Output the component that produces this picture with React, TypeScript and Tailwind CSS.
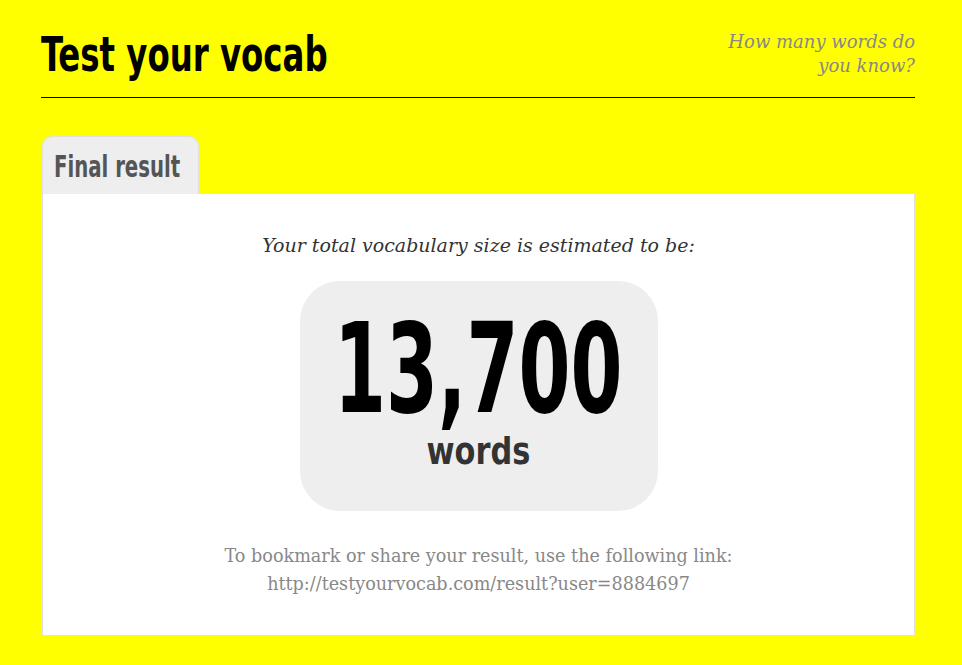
import React from 'react';

// Impact isn't installed: a condensed bold squeezed sideways stands in for it
const impact = "font-['Impact','DejaVu_Sans_Condensed',sans-serif] font-bold";
const serif = "font-['Georgia','DejaVu_Serif',serif]";

export default function App() {
  return (
    <div className="min-h-screen w-full bg-[#ffff00]">
      <div className="pl-[41px] pr-[47px] pt-[27px]">
        <header className="flex items-start justify-between border-b border-black pb-[16px]">
          <h1 className={`${impact} inline-block origin-left scale-x-[0.75] whitespace-nowrap text-[48px] leading-[54px] text-black`}>
            Test your vocab
          </h1>
          <p className={`${serif} italic text-[18px] leading-[24px] text-[#888888] text-right w-[200px] mt-[3px]`}>
            How many words do you know?
          </p>
        </header>

        <div className="mt-[38px]">
          <div className="ml-px w-[157px] h-[58px] rounded-t-[10px] bg-[#eeeeee] border border-b-0 border-[#e0e0e0] pl-[11px] pt-[13px]">
            <span className={`${impact} inline-block origin-left scale-x-[0.73] whitespace-nowrap text-[30px] leading-[34px] text-[#555555]`}>
              Final result
            </span>
          </div>
          <div className="ml-px border border-t-0 border-[#e0e0e0] bg-white flex flex-col items-center pt-[37px] pb-[37px]">
            <p className={`${serif} italic text-[19px] leading-[28px] text-[#333333]`}>
              Your total vocabulary size is estimated to be:
            </p>
            <div className="mt-[22px] w-[358px] h-[230px] rounded-[40px] bg-[#eeeeee] flex flex-col items-center pt-[30px]">
              <div className={`${impact} scale-x-[0.67] whitespace-nowrap text-[124px] leading-[116px] text-black`}>13,700</div>
              <div className={`${impact} scale-x-[0.89] whitespace-nowrap text-[38px] leading-[48px] text-[#333333]`}>words</div>
            </div>
            <div className={`${serif} mt-[31px] text-[17.6px] leading-[28px] text-[#888888] text-center`}>
              <p>To bookmark or share your result, use the following link:</p>
              <p>http://testyourvocab.com/result?user=8884697</p>
            </div>
          </div>
        </div>
      </div>
    </div>
  );
}
